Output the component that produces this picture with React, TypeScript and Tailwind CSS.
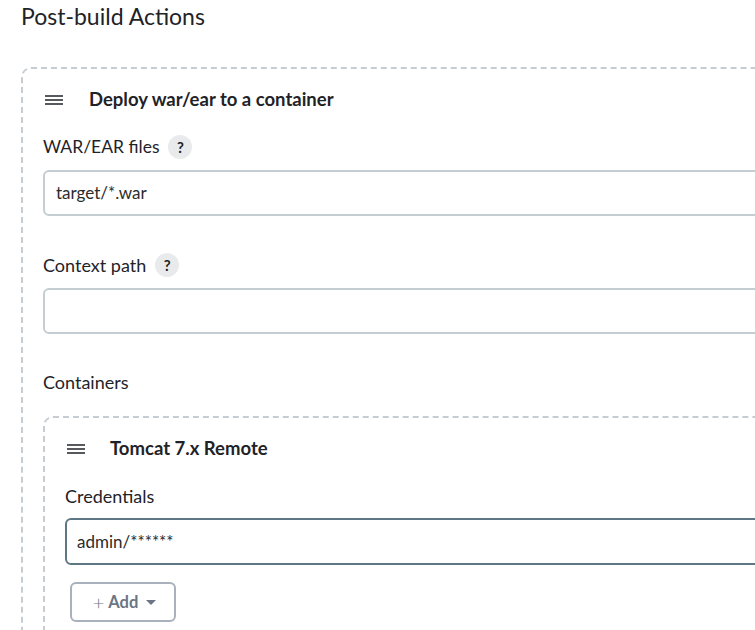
import React from "react";

function DragHandle() {
  return (
    <svg width="18" height="10" viewBox="0 0 18 10" className="shrink-0">
      <path d="M0 1h18M0 5h18M0 9h18" stroke="#1f2328" strokeWidth="1.6" />
    </svg>
  );
}

function HelpBadge() {
  return (
    <span className="ml-[9px] inline-flex h-6 w-6 items-center justify-center rounded-full bg-[#e8eaec] text-[15px] font-bold text-[#222]">
      ?
    </span>
  );
}

function Field({ value, focused }: { value?: string; focused?: boolean }) {
  return (
    <div
      className={
        focused
          ? "flex h-[47px] items-center rounded-[6px] border-2 border-[#5f7785] px-[10px] text-[17px] text-[#2b2b2b]"
          : "flex h-[46px] items-center rounded-[6px] border-2 border-[#c4cdd2] px-[11px] text-[17px] text-[#2b2b2b]"
      }
    >
      {value}
    </div>
  );
}

export default function App() {
  return (
    <div
      className="h-[630px] w-[755px] overflow-hidden bg-white pl-[21px] pt-[2px] text-[#1f2328]"
      style={{ fontFamily: 'Lato, "Noto Sans", sans-serif' }}
    >
      <h2 className="text-[23px] leading-7">Post-build Actions</h2>

      <div className="mt-[37px] w-[900px] rounded-[10px] border-2 border-dashed border-[#c5cdd2] pl-[20px] pt-[19px]">
        <div className="flex h-6 items-center">
          <span className="ml-[2px]">
            <DragHandle />
          </span>
          <span className="ml-[26px] text-[18.5px] font-bold">Deploy war/ear to a container</span>
        </div>

        <div className="mt-[23px] flex h-6 items-center text-[17.5px]">
          WAR/EAR files
          <HelpBadge />
        </div>
        <div className="mt-[11px]">
          <Field value="target/*.war" />
        </div>

        <div className="mt-[37px] flex h-6 items-center text-[18px]">
          Context path
          <HelpBadge />
        </div>
        <div className="mt-[11px]">
          <Field />
        </div>

        <div className="mt-[36px] text-[18px] leading-6">Containers</div>

        <div className="mt-[22px] h-[300px] rounded-[10px] border-2 border-dashed border-[#c5cdd2] pl-[20px] pt-[19px]">
          <div className="flex h-6 items-center">
            <span className="ml-[2px]">
              <DragHandle />
            </span>
            <span className="ml-[25px] text-[18.5px] font-bold">Tomcat 7.x Remote</span>
          </div>

          <div className="mt-[23px] text-[18px] leading-6">Credentials</div>
          <div className="mt-[10px]">
            <Field value="admin/******" focused />
          </div>

          <button className="ml-[5px] mt-[17px] flex h-[40px] w-[106px] items-center justify-center rounded-[6px] border-2 border-[#a9b1bd] pl-[3px] text-[16.5px] text-[#6b7585]">
            <span className="mr-[4px] text-[20px] font-light leading-none">+</span>
            <span className="font-bold">Add</span>
            <svg width="10" height="5" viewBox="0 0 10 5" className="ml-[8px]">
              <path d="M0 0h10L5 5z" fill="#6b7585" />
            </svg>
          </button>
        </div>
      </div>
    </div>
  );
}
